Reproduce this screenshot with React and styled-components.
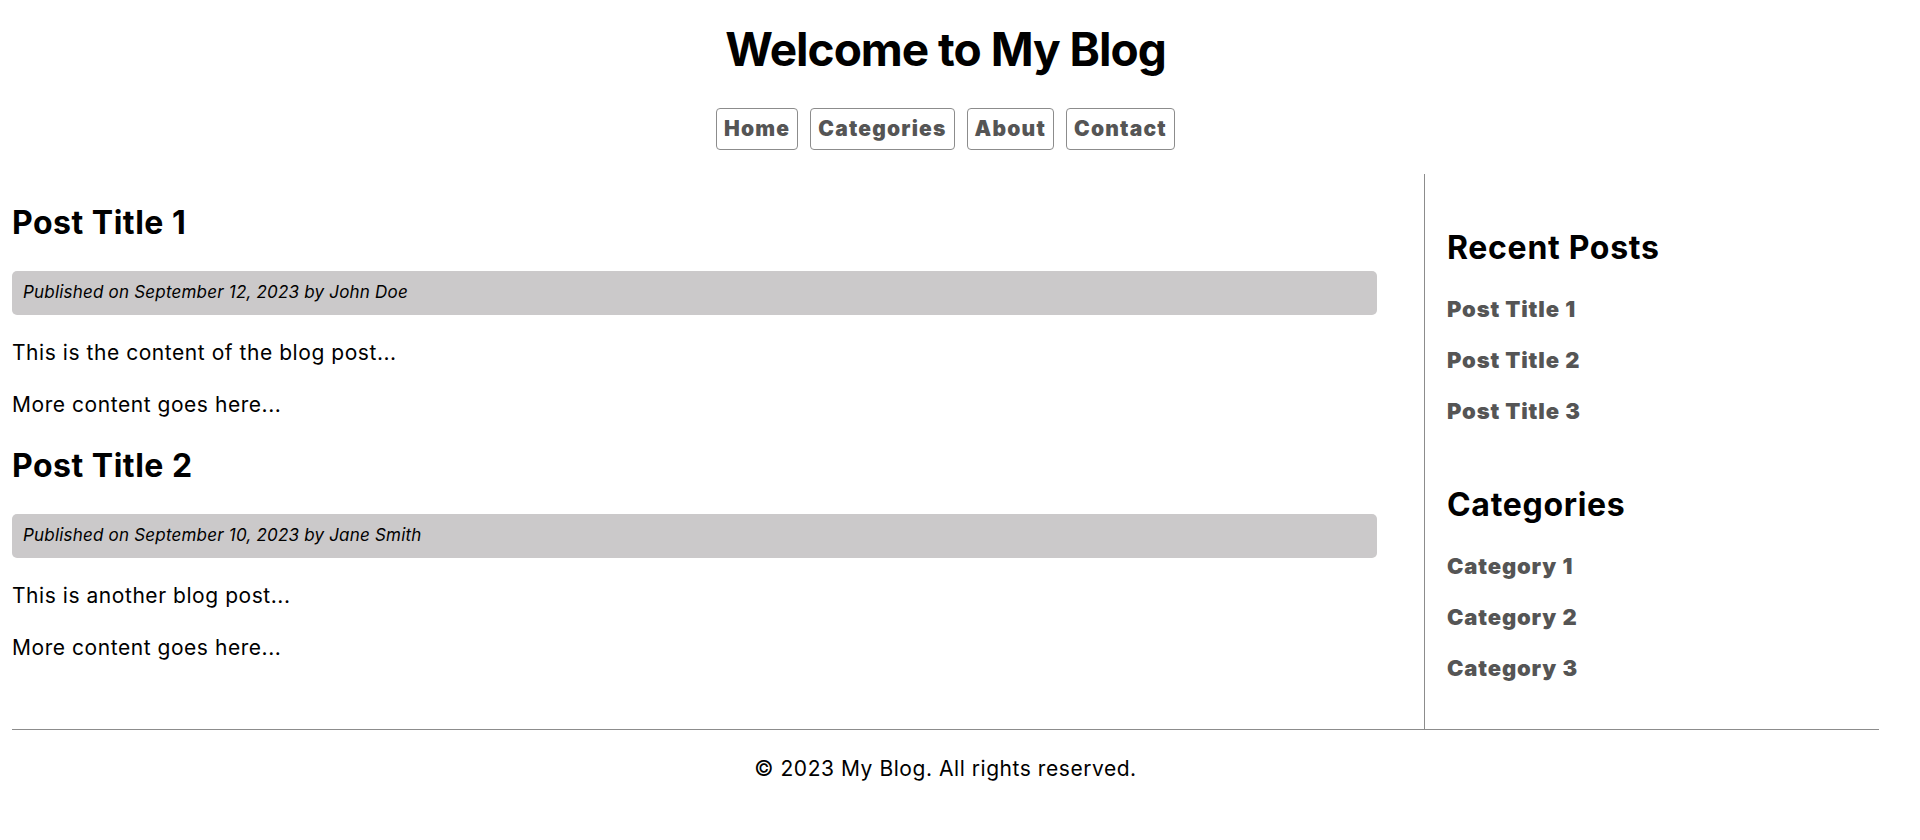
import React from "react";
import styled, { createGlobalStyle } from "styled-components";

const Global = createGlobalStyle`
  html, body { margin: 0; padding: 0; background: #fff; }
  body { font-family: Inter, "Noto Sans", Arial, sans-serif; color: #000; }
`;

const Page = styled.div`
  margin: 0 41px 0 12px;
`;

const Header = styled.header`
  display: flex;
  flex-direction: column;
  align-items: center;
  padding-top: 21px;
`;

const SiteTitle = styled.h1`
  margin: 0;
  font-size: 46px;
  font-weight: 700;
  line-height: 56px;
  letter-spacing: -1px;
`;

const Nav = styled.nav`
  display: flex;
  gap: 12px;
  margin-top: 31px;
`;

const NavButton = styled.a`
  display: block;
  border: 1px solid #8c8c8c;
  border-radius: 4px;
  padding: 8px 7px;
  font-size: 21px;
  line-height: 24px;
  font-weight: 900;
  letter-spacing: 1.2px;
  color: #555;
  text-decoration: none;
`;

const Row = styled.div`
  display: flex;
  gap: 47px;
  margin-top: 24px;
  border-bottom: 1px solid #8c8c8c;
`;

const Main = styled.main`
  flex: 1;
  min-width: 0;
  padding-top: 30px;
`;

const Post = styled.article`
  margin-bottom: 30px;
`;

const PostTitle = styled.h2`
  margin: 0 0 29px;
  font-size: 32px;
  font-weight: 700;
  line-height: 38px;
  letter-spacing: 0.5px;
`;

const Meta = styled.div`
  background: #cbc9ca;
  border-radius: 5px;
  padding: 11px 11px 12px;
  font-size: 17px;
  line-height: 21px;
  font-style: italic;
  letter-spacing: 0.2px;
  margin-bottom: 26px;
`;

const Para = styled.p`
  margin: 0 0 28px;
  font-size: 21px;
  line-height: 24px;
  letter-spacing: 0.55px;
  &:last-child { margin-bottom: 0; }
`;

const Sidebar = styled.aside`
  flex: 0 0 455px;
  box-sizing: border-box;
  border-left: 1px solid #8c8c8c;
  padding: 55px 0 47px 22px;
  display: flex;
  flex-direction: column;
  gap: 61px;
`;

const Widget = styled.section`
  display: flex;
  flex-direction: column;
`;

const WidgetTitle = styled.h3`
  margin: 0 0 29px;
  font-size: 32px;
  font-weight: 700;
  line-height: 38px;
  letter-spacing: 0.7px;
`;

const LinkList = styled.ul`
  list-style: none;
  margin: 0;
  padding: 0;
  display: flex;
  flex-direction: column;
  gap: 24px;
`;

const SideLink = styled.a`
  display: block;
  font-size: 22px;
  line-height: 27px;
  font-weight: 900;
  letter-spacing: 0.85px;
  color: #555;
  text-decoration: none;
`;

const Footer = styled.footer`
  text-align: center;
  padding-top: 27px;
  font-size: 21px;
  line-height: 24px;
  letter-spacing: 0.55px;
`;

const posts = [
  {
    title: "Post Title 1",
    meta: "Published on September 12, 2023 by John Doe",
    body: ["This is the content of the blog post...", "More content goes here..."],
  },
  {
    title: "Post Title 2",
    meta: "Published on September 10, 2023 by Jane Smith",
    body: ["This is another blog post...", "More content goes here..."],
  },
];

const widgets = [
  { title: "Recent Posts", links: ["Post Title 1", "Post Title 2", "Post Title 3"] },
  { title: "Categories", links: ["Category 1", "Category 2", "Category 3"] },
];

export default function App() {
  return (
    <Page>
      <Global />
      <Header>
        <SiteTitle>Welcome to My Blog</SiteTitle>
        <Nav>
          {["Home", "Categories", "About", "Contact"].map((n) => (
            <NavButton key={n} href="#">{n}</NavButton>
          ))}
        </Nav>
      </Header>
      <Row>
        <Main>
          {posts.map((p) => (
            <Post key={p.title}>
              <PostTitle>{p.title}</PostTitle>
              <Meta>{p.meta}</Meta>
              {p.body.map((b, i) => (
                <Para key={i}>{b}</Para>
              ))}
            </Post>
          ))}
        </Main>
        <Sidebar>
          {widgets.map((w) => (
            <Widget key={w.title}>
              <WidgetTitle>{w.title}</WidgetTitle>
              <LinkList>
                {w.links.map((l) => (
                  <li key={l}>
                    <SideLink href="#">{l}</SideLink>
                  </li>
                ))}
              </LinkList>
            </Widget>
          ))}
        </Sidebar>
      </Row>
      <Footer>© 2023 My Blog. All rights reserved.</Footer>
    </Page>
  );
}
